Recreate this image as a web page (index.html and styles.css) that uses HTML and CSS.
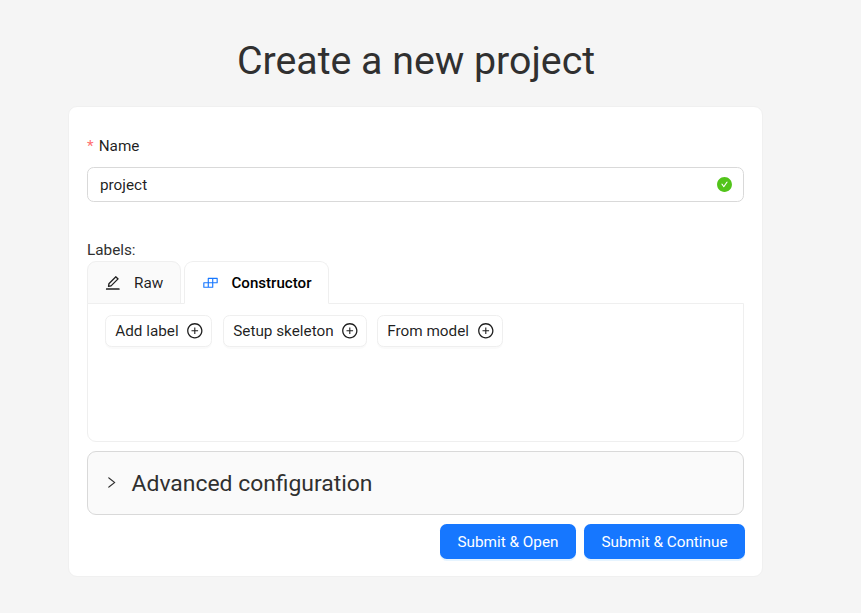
FILE: index.html
```html
<!DOCTYPE html>
<html lang="en">
<head>
<meta charset="utf-8">
<title>Create a new project</title>
<link rel="stylesheet" href="styles.css">
</head>
<body>
<svg class="sprite" aria-hidden="true">
  <symbol id="plus" viewBox="0 0 1024 1024"><path d="M696 480H544V328c0-4.400-3.600-8-8-8h-48c-4.400 0-8 3.600-8 8v152H328c-4.400 0-8 3.600-8 8v48c0 4.400 3.600 8 8 8h152v152c0 4.400 3.600 8 8 8h48c4.400 0 8-3.600 8-8V544h152c4.400 0 8-3.600 8-8v-48c0-4.400-3.600-8-8-8z"/><path d="M512 64C264.600 64 64 264.600 64 512s200.600 448 448 448 448-200.600 448-448S759.400 64 512 64zm0 820c-205.400 0-372-166.600-372-372s166.600-372 372-372 372 166.600 372 372-166.600 372-372 372z"/></symbol>
</svg>
<main class="page">
  <h1 class="title">Create a new project</h1>
  <form class="card">
    <label class="field-label"><span class="required">*</span>Name</label>
    <div class="input">
      <span>project</span>
      <svg class="icon valid" viewBox="0 0 1024 1024"><path d="M512 64C264.600 64 64 264.600 64 512s200.600 448 448 448 448-200.600 448-448S759.400 64 512 64zm193.500 301.700l-210.600 292a31.800 31.800 0 01-51.700 0L318.500 484.900c-3.800-5.300 0-12.700 6.500-12.700h46.900c10.200 0 19.900 4.900 25.900 13.300l71.200 98.800 157.200-218c6-8.300 15.600-13.300 25.900-13.300H699c6.500 0 10.300 7.400 6.500 12.700z"/></svg>
    </div>
    <div class="labels-title">Labels:</div>
    <div class="tabs">
      <div class="tab">
        <svg class="icon" viewBox="0 0 1024 1024"><path d="M257.700 752c2 0 4-.2 6-.5L431.900 722c2-.4 3.900-1.300 5.300-2.800l423.900-423.900a9.960 9.960 0 000-14.100L694.900 114.900c-1.900-1.900-4.400-2.900-7.100-2.900s-5.200 1-7.100 2.900L256.800 538.800c-1.500 1.500-2.400 3.300-2.800 5.300l-29.500 168.200a33.500 33.500 0 009.400 29.800c6.600 6.400 14.900 9.900 23.800 9.900zm67.400-174.400L687.800 215l73.300 73.300-362.700 362.600-88.900 15.700 15.600-89zM880 836H144c-17.700 0-32 14.300-32 32v36c0 4.400 3.600 8 8 8h784c4.400 0 8-3.600 8-8v-36c0-17.700-14.300-32-32-32z"/></svg>
        <span>Raw</span>
      </div>
      <div class="tab active">
        <svg class="icon blue" viewBox="0 0 1024 1024"><path d="M916 210H376c-17.700 0-32 14.300-32 32v236H108c-17.700 0-32 14.300-32 32v272c0 17.700 14.300 32 32 32h540c17.700 0 32-14.300 32-32V546h236c17.700 0 32-14.300 32-32V242c0-17.700-14.300-32-32-32zm-504 68h200v200H412V278zm-68 468H144V546h200v200zm268 0H412V546h200v200zm268-268H680V278h200v200z"/></svg>
        <span>Constructor</span>
      </div>
    </div>
    <div class="panel">
      <button type="button" class="btn add"><span>Add label</span><svg class="icon"><use href="#plus"/></svg></button>
      <button type="button" class="btn skeleton"><span>Setup skeleton</span><svg class="icon"><use href="#plus"/></svg></button>
      <button type="button" class="btn model"><span>From model</span><svg class="icon"><use href="#plus"/></svg></button>
    </div>
    <div class="advanced">
      <svg class="chevron" viewBox="0 0 1024 1024"><path d="M765.700 486.800L314.900 134.700A7.970 7.970 0 00302 141v77.300c0 4.900 2.300 9.600 6.100 12.600l360 281.100-360 281.100c-3.900 3-6.100 7.700-6.100 12.600V883c0 6.700 7.700 10.400 12.900 6.300l450.800-352.100a31.960 31.960 0 000-50.400z"/></svg>
      <span class="advanced-title">Advanced configuration</span>
    </div>
    <div class="actions">
      <button type="button" class="submit open">Submit &amp; Open</button>
      <button type="button" class="submit continue">Submit &amp; Continue</button>
    </div>
  </form>
</main>
</body>
</html>
```
FILE: styles.css
```css
* { box-sizing: border-box; }
body {
  margin: 0;
  min-height: 613px;
  background: #f5f5f5;
  font: 15.3px/24px Roboto, sans-serif;
  color: rgba(0, 0, 0, .88);
}
.sprite { display: none; }
button { font: inherit; color: inherit; white-space: nowrap; }
.page { width: 695px; margin-left: 68px; padding-top: 36px; }
.title {
  margin: 0 0 20px;
  padding-left: 1px;
  font-size: 39.3px;
  font-weight: 400;
  line-height: 50px;
  text-align: center;
  color: #303030;
}
.card {
  height: 471px;
  padding: 27px 17px 0 18px;
  background: #fff;
  border: 1px solid #f0f0f0;
  border-radius: 9px;
}
.field-label { display: flex; }
.required { width: 11.7px; color: #ff7072; }
.input {
  display: flex;
  align-items: center;
  justify-content: space-between;
  width: 657px;
  height: 35px;
  margin-top: 9px;
  padding: 0 10px 0 12px;
  border: 1px solid #d9d9d9;
  border-radius: 6.6px;
}
.icon { display: block; flex: none; width: 17.6px; height: 17.6px; fill: currentColor; }
.icon.valid { width: 17px; height: 17px; color: #52c41a; }
.icon.blue { width: 17px; color: #1677ff; }
.labels-title { margin-top: 36px; height: 23px; color: #303030; }
.tabs { display: flex; gap: 3px; height: 43px; width: 657px; }
.tab {
  display: flex;
  align-items: center;
  gap: 12.5px;
  width: 94px;
  height: 43px;
  padding-left: 16px;
  background: #fafafa;
  border: 1px solid #efefef;
  border-radius: 9px 9px 0 0;
}
.tab.active {
  position: relative;
  width: 145px;
  padding-left: 17px;
  background: #fff;
  border-bottom-color: #fff;
  color: #000;
  font-weight: 500;
  font-size: 15.1px;
  z-index: 1;
}
.panel {
  display: flex;
  align-items: flex-start;
  width: 657px;
  height: 139px;
  margin-top: -1px;
  padding: 11px 17px;
  border: 1px solid #efefef;
  border-radius: 0 0 9px 9px;
}
.btn {
  display: flex;
  align-items: center;
  justify-content: space-between;
  height: 32px;
  padding: 0 7.2px 0 9.2px;
  background: #fff;
  border: 1px solid #efefef;
  border-radius: 6.6px;
  box-shadow: 0 2px 0 rgba(0, 0, 0, .02);
}
.add { width: 107px; margin-right: 11px; }
.skeleton { width: 144px; margin-right: 10px; }
.model { width: 126px; }
.advanced {
  display: flex;
  align-items: center;
  gap: 12.6px;
  width: 657px;
  height: 64px;
  margin-top: 9px;
  padding-left: 16px;
  background: #fafafa;
  border: 1px solid #d9d9d9;
  border-radius: 9px;
  font-size: 22.9px;
  color: #303030;
}
.advanced-title { padding-top: 2px; }
.chevron { width: 15px; height: 15px; margin-bottom: 1px; fill: currentColor; }
.actions { display: flex; justify-content: flex-end; gap: 8px; width: 658px; margin-top: 9px; }
.submit {
  height: 35px;
  padding: 0;
  border: 0;
  border-radius: 6.6px;
  background: #1677ff;
  color: #fff;
  box-shadow: 0 2px 0 rgba(5, 145, 255, .1);
}
.open { width: 136px; }
.continue { width: 161px; }
```
